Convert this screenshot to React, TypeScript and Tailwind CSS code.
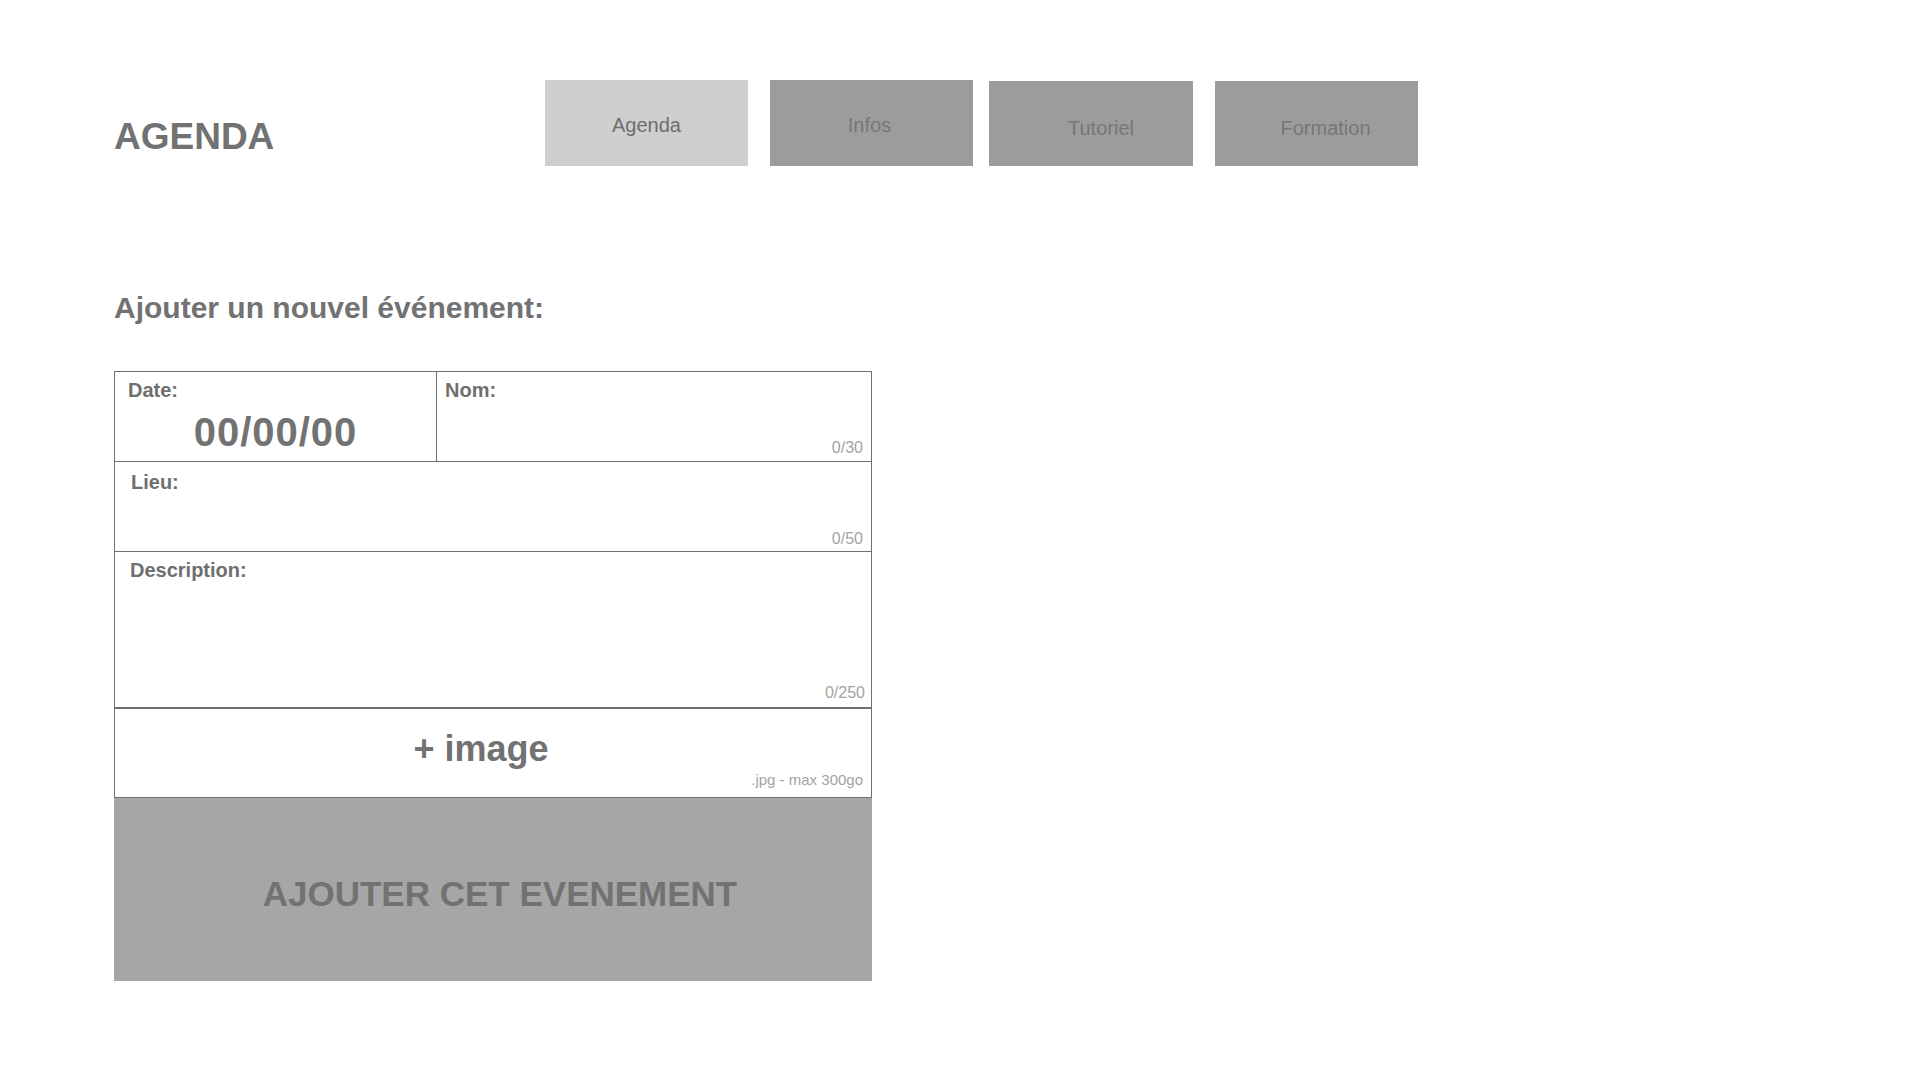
export default function App() {
  return (
    <main className="w-full h-[1080px] bg-white text-[#727272] font-['Liberation_Sans',Arial,sans-serif] pt-[80px] pl-[114px]">
      {/* Header */}
      <div className="flex items-start">
        <div className="w-[431px] pt-[38px]">
          <h1 className="text-[37px] leading-none font-bold">AGENDA</h1>
        </div>
        <div className="h-[86px] w-[203px] bg-[#cfcfcf] flex items-center justify-center pt-[4px] text-[20px] text-[#6e6e6e]">Agenda</div>
        <div className="ml-[22px] h-[86px] w-[203px] bg-[#9c9c9c] flex items-center justify-center pt-[4px] pr-[4px] text-[20px] text-[#777777]">Infos</div>
        <div className="ml-[16px] mt-px h-[85px] w-[204px] bg-[#9c9c9c] flex items-center justify-center pt-[8px] pl-[20px] text-[20px] text-[#777777]">Tutoriel</div>
        <div className="ml-[22px] mt-px h-[85px] w-[203px] bg-[#9c9c9c] flex items-center justify-center pt-[8px] pl-[18px] text-[20px] text-[#777777]">Formation</div>
      </div>

      <h2 className="mt-[127px] text-[30px] leading-none font-bold">Ajouter un nouvel événement:</h2>

      {/* Form */}
      <div className="mt-[48px] w-[758px] flex flex-col">
        <div className="border border-b-0 border-[#707070]">
          <div className="flex h-[90px] border-b border-[#707070]">
            <div className="w-[322px] border-r border-[#707070] pt-[8px] pl-[13px]">
              <p className="text-[20px] leading-none font-bold text-[#6f6f6f]">Date:</p>
              <p className="mt-[12px] -ml-[13px] text-center text-[40px] leading-none font-bold tracking-[1px]">00/00/00</p>
            </div>
            <div className="flex-1 flex flex-col pt-[8px] pl-[8px] pr-[8px] pb-[5px]">
              <p className="text-[20px] leading-none font-bold text-[#6f6f6f]">Nom:</p>
              <p className="mt-auto self-end text-[16px] leading-none text-[#a3a3a3]">0/30</p>
            </div>
          </div>
          <div className="flex flex-col h-[90px] border-b border-[#707070] pt-[10px] pl-[16px] pr-[8px] pb-[4px]">
            <p className="text-[20px] leading-none font-bold text-[#6f6f6f]">Lieu:</p>
            <p className="mt-auto self-end text-[16px] leading-none text-[#a3a3a3]">0/50</p>
          </div>
          <div className="flex flex-col h-[157px] border-b-2 border-[#707070] pt-[8px] pl-[15px] pr-[6px] pb-[6px]">
            <p className="text-[20px] leading-none font-bold text-[#6f6f6f]">Description:</p>
            <p className="mt-auto self-end text-[16px] leading-none text-[#a3a3a3]">0/250</p>
          </div>
          <div className="flex flex-col h-[89px] border-b border-[#707070] pt-[22px] pr-[8px] pb-[10px]">
            <p className="pr-[16px] text-center text-[36px] leading-none font-bold">+ image</p>
            <p className="mt-auto self-end text-[15px] leading-none text-[#a3a3a3]">.jpg - max 300go</p>
          </div>
        </div>
        <button className="h-[183px] w-full bg-[#a6a6a6] flex items-center justify-center pt-[8px] pl-[14px] text-[35px] leading-none font-bold text-[#727272]">
          AJOUTER CET EVENEMENT
        </button>
      </div>
    </main>
  )
}
